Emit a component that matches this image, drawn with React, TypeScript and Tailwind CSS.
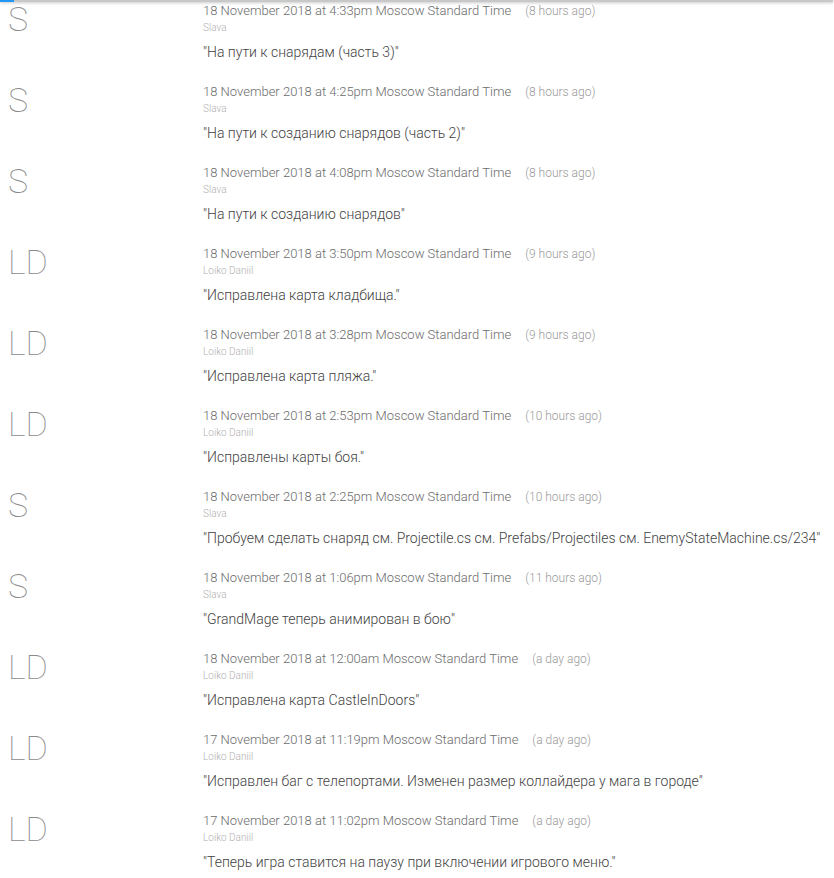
type Commit = {
  initials: string;
  author: string;
  date: string;
  ago: string;
  message: string;
};

const commits: Commit[] = [
  { initials: "S", author: "Slava", date: "18 November 2018 at 4:33pm", ago: "8 hours ago", message: "На пути к снарядам (часть 3)" },
  { initials: "S", author: "Slava", date: "18 November 2018 at 4:25pm", ago: "8 hours ago", message: "На пути к созданию снарядов (часть 2)" },
  { initials: "S", author: "Slava", date: "18 November 2018 at 4:08pm", ago: "8 hours ago", message: "На пути к созданию снарядов" },
  { initials: "LD", author: "Loiko Daniil", date: "18 November 2018 at 3:50pm", ago: "9 hours ago", message: "Исправлена карта кладбища." },
  { initials: "LD", author: "Loiko Daniil", date: "18 November 2018 at 3:28pm", ago: "9 hours ago", message: "Исправлена карта пляжа." },
  { initials: "LD", author: "Loiko Daniil", date: "18 November 2018 at 2:53pm", ago: "10 hours ago", message: "Исправлены карты боя." },
  { initials: "S", author: "Slava", date: "18 November 2018 at 2:25pm", ago: "10 hours ago", message: "Пробуем сделать снаряд см. Projectile.cs см. Prefabs/Projectiles см. EnemyStateMachine.cs/234" },
  { initials: "S", author: "Slava", date: "18 November 2018 at 1:06pm", ago: "11 hours ago", message: "GrandMage теперь анимирован в бою" },
  { initials: "LD", author: "Loiko Daniil", date: "18 November 2018 at 12:00am", ago: "a day ago", message: "Исправлена карта CastleInDoors" },
  { initials: "LD", author: "Loiko Daniil", date: "17 November 2018 at 11:19pm", ago: "a day ago", message: "Исправлен баг с телепортами. Изменен размер коллайдера у мага в городе" },
  { initials: "LD", author: "Loiko Daniil", date: "17 November 2018 at 11:02pm", ago: "a day ago", message: "Теперь игра ставится на паузу при включении игрового меню." },
];

const Row = ({ c }: { c: Commit }) => {
  return (
    <div className="flex h-[81px]">
      {/* Avatar initials */}
      <div className="w-[203px] shrink-0 pl-[8px] pt-[2px]">
        <span className="block text-[34px] leading-[34px] font-thin text-[#8a8a8a]">
          {c.initials}
        </span>
      </div>
      {/* Commit info */}
      <div className="flex flex-col pt-[3px]">
        <div className="flex items-baseline whitespace-nowrap">
          <span className="text-[13px] leading-[16px] font-light text-[#6b6b6b]">
            {c.date} Moscow Standard Time
          </span>
          <span className="ml-[14px] text-[12px] leading-[16px] font-light text-[#9a9a9a]">
            ({c.ago})
          </span>
        </div>
        <span className="mt-[1px] text-[10px] leading-[16px] font-light text-[#b0b0b0]">{c.author}</span>
        <span className="mt-[6px] text-[14px] leading-[20px] font-light text-[#424242] whitespace-nowrap">
          "{c.message}"
        </span>
      </div>
    </div>
  );
};

export default function App() {
  return (
    <div className="relative w-[834px] h-[878px] overflow-hidden bg-white font-['Roboto',sans-serif]">
      {/* top header edge with progress */}
      <div className="absolute top-0 left-0 w-[833px] h-[2px] bg-[#c8c8c8] shadow-[0_1px_3px_rgba(0,0,0,0.25)]">
        <div className="w-[14px] h-[2px] bg-[#2196f3]"></div>
      </div>
      <div className="flex flex-col">
        {commits.map((c, i) => (
          <Row key={i} c={c} />
        ))}
      </div>
    </div>
  );
}
